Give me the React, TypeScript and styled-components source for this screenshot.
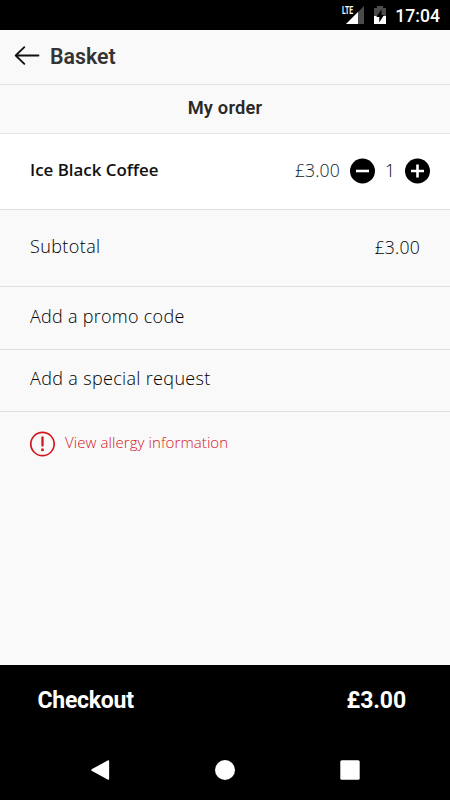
import React from "react";
import styled, { createGlobalStyle } from "styled-components";

const GlobalStyle = createGlobalStyle`
  * { box-sizing: border-box; }
  body { margin: 0; background: #000; }
  button { border: 0; padding: 0; background: none; color: inherit; font: inherit; text-align: left; }
`;

const Screen = styled.div`
  width: 450px;
  height: 800px;
  display: flex;
  flex-direction: column;
  overflow: hidden;
  background: #f9f9f9;
  color: #000;
  font-family: "Open Sans", "Noto Sans", sans-serif;
  svg { display: block; flex: none; }
`;

const StatusBar = styled.div`
  height: 30px;
  display: flex;
  align-items: center;
  justify-content: flex-end;
  gap: 8px;
  padding-right: 10px;
  background: #000;
  color: #fff;
`;

const Label = styled.span<{
  $size: number;
  $weight?: number;
  $spacing?: number;
  $roboto?: boolean;
  $color?: string;
  $shift?: number;
}>`
  font-family: ${(p) => (p.$roboto ? "Roboto, sans-serif" : "inherit")};
  font-size: ${(p) => p.$size}px;
  font-weight: ${(p) => p.$weight ?? 300};
  letter-spacing: ${(p) => p.$spacing ?? 0}px;
  color: ${(p) => p.$color ?? "inherit"};
  line-height: 26px;
  white-space: nowrap;
  transform: translateY(${(p) => p.$shift ?? 0}px);
`;

const Header = styled.header`
  height: 55px;
  display: flex;
  align-items: center;
  gap: 10px;
  padding-left: 14px;
  padding-bottom: 3px;
  border-bottom: 1px solid #e2e2e2;
`;

const SectionTitle = styled.div`
  height: 49px;
  display: flex;
  align-items: center;
  justify-content: center;
  padding-bottom: 3px;
  border-bottom: 1px solid #e4e4e4;
`;

const OrderRow = styled.div`
  height: 76px;
  display: flex;
  align-items: center;
  justify-content: space-between;
  padding: 0 20px 1px 30px;
  background: #fff;
  border-bottom: 1px solid #dedede;
`;

const Quantity = styled.div`
  display: flex;
  align-items: center;
`;

const Count = styled.div`
  width: 30px;
  display: flex;
  justify-content: center;
`;

const PriceSlot = styled.div`
  display: flex;
  margin-right: 10px;
`;

const SubtotalRow = styled.div`
  height: 77px;
  display: flex;
  align-items: center;
  justify-content: space-between;
  padding: 0 30px 3px;
  border-bottom: 1px solid #e0e0e0;
`;

const ActionRow = styled.button`
  height: 62.5px;
  display: flex;
  align-items: center;
  padding: 0 30px 3px;
  border-bottom: 1px solid #dedede;
`;

const AllergyLink = styled.button`
  height: 63px;
  display: flex;
  align-items: center;
  gap: 10px;
  padding-left: 29px;
  color: #d3171e;
`;

const Spacer = styled.div`
  flex: 1;
`;

const CheckoutBar = styled.button`
  height: 75px;
  display: flex;
  align-items: center;
  justify-content: space-between;
  padding: 0 44px 4px 37.5px;
  background: #000;
  color: #fff;
`;

const NavBar = styled.nav`
  height: 60px;
  display: flex;
  align-items: center;
  justify-content: space-around;
  padding: 0 37px;
  background: #000;
`;

const SignalText = styled.text`
  font: 700 10px Roboto, sans-serif;
`;

const SignalIcon = () => (
  <svg width="24" height="20" viewBox="0 0 24 20">
    <path d="M23 1V19H5Z" fill="#4b4b4b" />
    <path d="M17 7V19H5Z" fill="#fff" />
    <SignalText x="1" y="9" textLength="11" lengthAdjust="spacingAndGlyphs" fill="#fff">LTE</SignalText>
  </svg>
);

const BatteryIcon = () => (
  <svg width="14" height="20" viewBox="0 0 14 20">
    <path d="M4 1h6v2h3v16H1V3h3Z" fill="#4b4b4b" />
    <path d="M1 11h12v8H1Z" fill="#fff" />
    <path d="M8.5 4.5 3.3 12h3v5.5L11 10H8.5Z" fill="#000" />
  </svg>
);

const BackArrow = () => (
  <svg width="26" height="20" viewBox="0 0 26 20" fill="none" stroke="#111" strokeWidth="1.8" strokeLinecap="round" strokeLinejoin="round">
    <path d="M1.7 9.5H24.5M10.3 1.1 1.7 9.5l8.6 8.4" />
  </svg>
);

const StepIcon = ({ plus }: { plus?: boolean }) => (
  <svg width="25" height="26" viewBox="0 0 25 26">
    <circle cx="12.5" cy="13" r="12.5" fill="#000" />
    <path d={plus ? "M6 13H19M12.5 6.5V19.5" : "M6 13H19"} stroke="#fff" strokeWidth="2.6" />
  </svg>
);

const AlertIcon = () => (
  <svg width="26" height="26" viewBox="0 0 26 26">
    <circle cx="13.5" cy="13" r="11.7" fill="none" stroke="#d3171e" strokeWidth="1.7" />
    <path d="M13.5 6.5V14.5" stroke="#d3171e" strokeWidth="2.3" strokeLinecap="round" />
    <circle cx="13.5" cy="18.7" r="1.5" fill="#d3171e" />
  </svg>
);

export default function App() {
  return (
    <Screen>
      <GlobalStyle />
      <StatusBar>
        <SignalIcon />
        <BatteryIcon />
        <Label $roboto $size={17.6} $weight={500} $shift={1}>17:04</Label>
      </StatusBar>
      <Header>
        <BackArrow />
        <Label $roboto $size={21.3} $weight={600} $color="#333" $shift={1}>Basket</Label>
      </Header>
      <SectionTitle>
        <Label $roboto $size={18.3} $weight={600} $spacing={0.2} $color="#292929">My order</Label>
      </SectionTitle>
      <OrderRow>
        <Label $size={16.9} $weight={600} $color="#111" $shift={-1}>Ice Black Coffee</Label>
        <Quantity>
          <PriceSlot><Label $size={17.6} $spacing={0.15} $color="#0d1a2a" $shift={-1}>£3.00</Label></PriceSlot>
          <StepIcon />
          <Count><Label $size={17.6} $shift={-1}>1</Label></Count>
          <StepIcon plus />
        </Quantity>
      </OrderRow>
      <SubtotalRow>
        <Label $size={18} $spacing={0.4} $shift={-1}>Subtotal</Label>
        <Label $size={17.6} $spacing={0.2}>£3.00</Label>
      </SubtotalRow>
      <ActionRow><Label $size={18} $spacing={0.27}>Add a promo code</Label></ActionRow>
      <ActionRow><Label $size={18} $spacing={0.34} $shift={-1}>Add a special request</Label></ActionRow>
      <AllergyLink>
        <AlertIcon />
        <Label $size={15} $spacing={0.09} $shift={-2}>View allergy information</Label>
      </AllergyLink>
      <Spacer />
      <CheckoutBar>
        <Label $roboto $size={23} $weight={700} $spacing={-0.25}>Checkout</Label>
        <Label $roboto $size={23} $weight={700} $spacing={-0.1}>£3.00</Label>
      </CheckoutBar>
      <NavBar>
        <svg width="20" height="20" viewBox="0 0 20 20"><path d="M18.4 1v18L2 10Z" fill="#fff" stroke="#fff" strokeWidth="1.5" strokeLinejoin="round" /></svg>
        <svg width="20" height="20" viewBox="0 0 20 20"><circle cx="10" cy="10" r="10" fill="#fff" /></svg>
        <svg width="20" height="20" viewBox="0 0 20 20"><rect x=".3" y=".3" width="19.4" height="19.4" rx="1.5" fill="#fff" /></svg>
      </NavBar>
    </Screen>
  );
}
